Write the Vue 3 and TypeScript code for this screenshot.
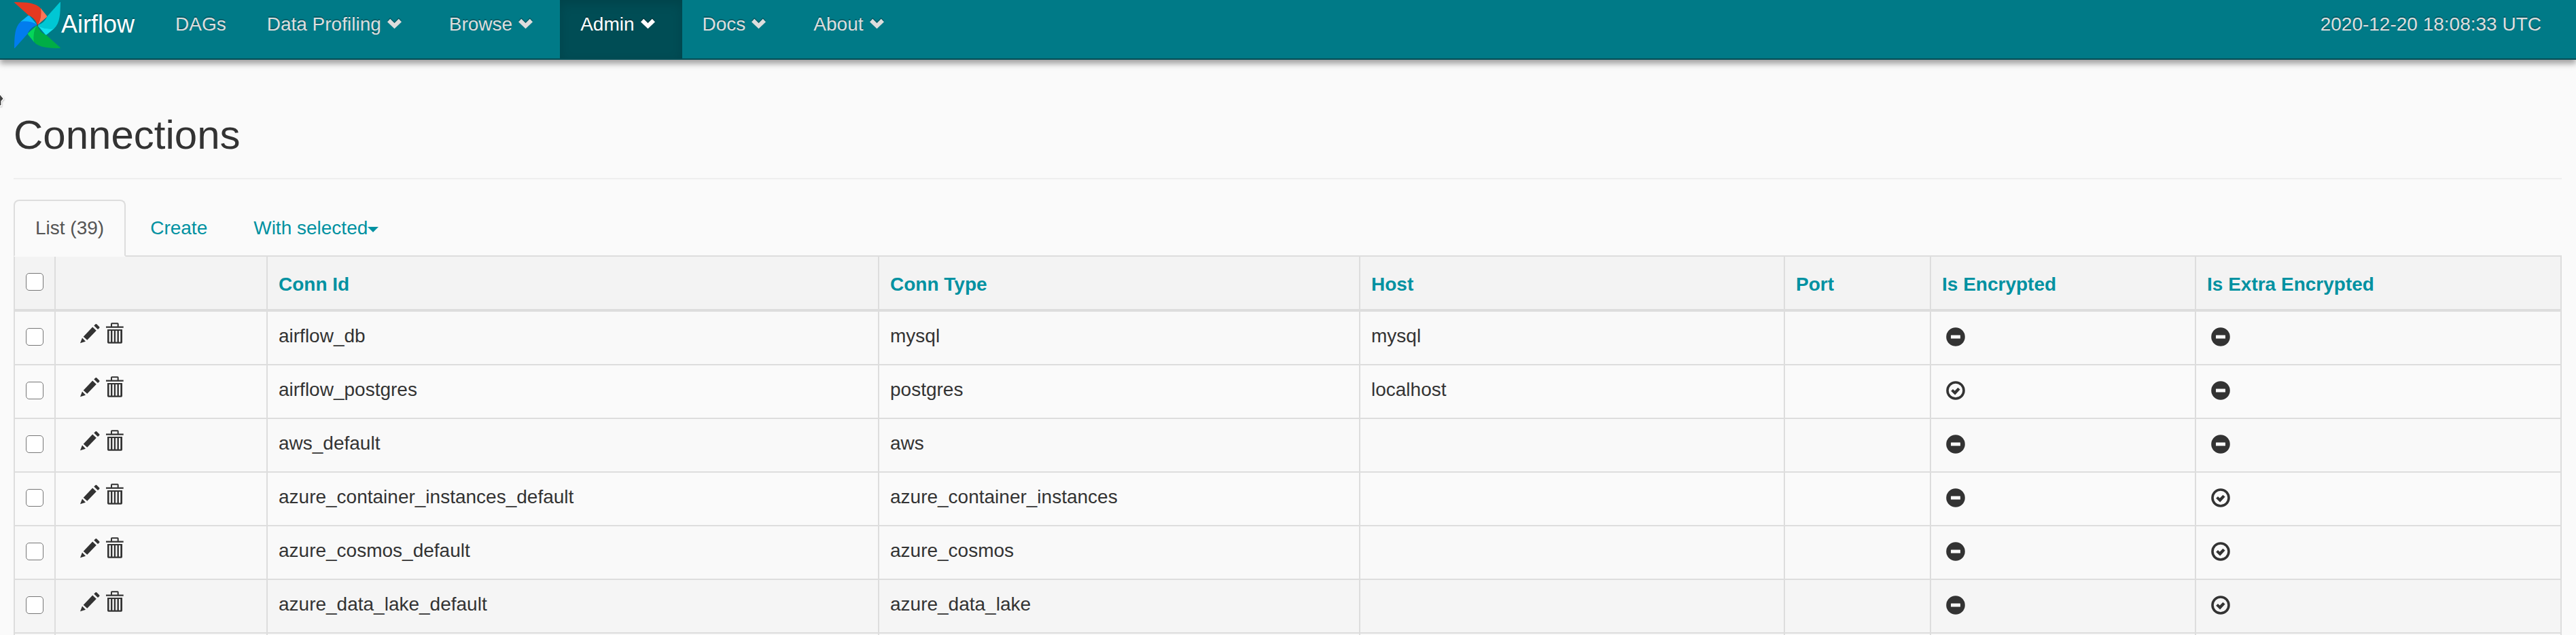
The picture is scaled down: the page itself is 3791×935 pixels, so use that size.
<script setup lang="ts">
interface NavItem {
  label: string
  menu: boolean
  active?: boolean
}

interface Connection {
  id: string
  type: string
  host: string
  port: string
  encrypted: boolean
  extraEncrypted: boolean
}

const navItems: NavItem[] = [
  { label: 'DAGs', menu: false },
  { label: 'Data Profiling', menu: true },
  { label: 'Browse', menu: true },
  { label: 'Admin', menu: true, active: true },
  { label: 'Docs', menu: true },
  { label: 'About', menu: true },
]

const headings: string[] = ['Conn Id', 'Conn Type', 'Host', 'Port', 'Is Encrypted', 'Is Extra Encrypted']

const connections: Connection[] = [
  { id: 'airflow_db', type: 'mysql', host: 'mysql', port: '', encrypted: false, extraEncrypted: false },
  { id: 'airflow_postgres', type: 'postgres', host: 'localhost', port: '', encrypted: true, extraEncrypted: false },
  { id: 'aws_default', type: 'aws', host: '', port: '', encrypted: false, extraEncrypted: false },
  { id: 'azure_container_instances_default', type: 'azure_container_instances', host: '', port: '', encrypted: false, extraEncrypted: true },
  { id: 'azure_cosmos_default', type: 'azure_cosmos', host: '', port: '', encrypted: false, extraEncrypted: true },
  { id: 'azure_data_lake_default', type: 'azure_data_lake', host: '', port: '', encrypted: false, extraEncrypted: true },
]

const blades = [
  { angle: 270, main: '#017cee', light: '#0cb6ff' },
  { angle: 180, main: '#00ad46', light: '#04d659' },
  { angle: 90, main: '#00c7d4', light: '#11e1ee' },
  { angle: 0, main: '#e43921', light: '#ff7557' },
]
</script>

<template>
  <div class="page">
    <nav class="navbar">
      <a class="brand">
        <svg class="logo" viewBox="-102 -102 204 204">
          <g v-for="b in blades" :key="b.angle" :transform="`rotate(${b.angle})`">
            <path :fill="b.light" d="M15 -74L41 -42Q44 -38 41 -35L0 0Q19 -30 15 -74Z" />
            <path :fill="b.main" d="M-101 -102C-50 -101 -8 -100 15 -74C19 -45 14 -15 0 0C-5 -20 -18 -35 -38 -43L-102 -100Z" />
          </g>
          <circle r="4" fill="#51504f" />
        </svg>
        <span>Airflow</span>
      </a>
      <a v-for="item in navItems" :key="item.label" class="nav-item" :class="{ active: item.active }">
        <span>{{ item.label }}</span>
        <svg v-if="item.menu" class="chevron" viewBox="0 0 32 40">
          <path class="chevron-shade" d="M1 14.3L5.2 9.8L11.5 16L17.8 9.8L22 14.3L11.5 24.3Z" />
          <path d="M1 16.3L5.2 11.8L11.5 18L17.8 11.8L22 16.3L11.5 26.3Z" fill="currentColor" />
        </svg>
      </a>
      <span class="clock">2020-12-20 18:08:33 UTC</span>
    </nav>

    <svg class="pointer" viewBox="0 0 10 24">
      <path d="M-4 -2L5.6 9.3L2.2 13V19.8H-4Z" />
    </svg>

    <main>
      <h2>Connections</h2>
      <hr />
      <ul class="tabs">
        <li class="active">List (39)</li>
        <li>Create</li>
        <li>With selected<span class="caret"></span></li>
      </ul>

      <table>
        <colgroup>
          <col class="c-check" />
          <col class="c-actions" />
          <col class="c-id" />
          <col class="c-type" />
          <col class="c-host" />
          <col class="c-port" />
          <col class="c-enc" />
          <col />
        </colgroup>
        <thead>
          <tr>
            <th class="check"><input type="checkbox" /></th>
            <th></th>
            <th v-for="h in headings" :key="h">{{ h }}</th>
          </tr>
        </thead>
        <tbody>
          <tr v-for="(c, i) in connections" :key="c.id" :class="{ hovered: i === 5 }">
            <td class="check"><input type="checkbox" /></td>
            <td class="actions">
              <svg class="pencil" viewBox="0 0 29 30">
                <path d="M0 29.3L3 21.6L8 26.7ZM4.7 19.7L18.2 5.6L23.8 10.8L10.3 24.8ZM20.3 3.5L22.6 1.2Q23.4 .6 24.2 1.2L28.2 5.2Q28.9 6 28.2 6.9L26 9Z" />
              </svg>
              <svg class="trash" viewBox="0 0 26 31">
                <path fill-rule="evenodd" d="M0 5.4H7V2Q7 .3 8.7 .3H17Q18.7 .3 18.7 2V5.4H25.7V7.8H0ZM9 5.4H16.7V2.2H9ZM2 10H24V29Q24 30.7 22.3 30.7H3.7Q2 30.7 2 29ZM4.6 12V28.5H7V12ZM9.4 12V28.5H11.8V12ZM14.1 12V28.5H16.5V12ZM18.9 12V28.5H21.3V12Z" />
              </svg>
            </td>
            <td>{{ c.id }}</td>
            <td>{{ c.type }}</td>
            <td>{{ c.host }}</td>
            <td>{{ c.port }}</td>
            <td v-for="(on, k) in [c.encrypted, c.extraEncrypted]" :key="k" class="flag">
              <svg v-if="on" viewBox="0 0 28 28">
                <circle cx="14" cy="14" r="12" fill="none" stroke="#333" stroke-width="3.6" />
                <path d="M7.2 14.8L10 12L12.7 14.5L17.4 9.8L20.6 12.6L13.2 20.5Z" />
              </svg>
              <svg v-else viewBox="0 0 28 28">
                <path fill-rule="evenodd" d="M14 .2A13.8 13.8 0 1 1 14 27.8A13.8 13.8 0 1 1 14 .2ZM7.6 11.4Q7 11.4 7 12V16Q7 16.6 7.6 16.6H20.4Q21 16.6 21 16V12Q21 11.4 20.4 11.4Z" />
              </svg>
            </td>
          </tr>
          <tr>
            <td v-for="n in 8" :key="n"></td>
          </tr>
        </tbody>
      </table>
    </main>
  </div>
</template>

<style>
body {
  background: #fafafa;
  overflow: hidden;
}
</style>

<style scoped>
.page {
  position: relative;
  height: 935px;
  overflow: hidden;
  background: #fafafa;
  color: #333;
  font: 28px/40px "Liberation Sans", Arial, sans-serif;
}
.navbar {
  display: flex;
  height: 86px;
  background: #007a87;
  border-bottom: 2px solid #004d55;
  box-shadow: 0 6px 8px rgba(0, 0, 0, 0.35);
  color: #ddd;
  text-shadow: 0 -2px 0 rgba(0, 0, 0, 0.25);
}
.brand {
  display: flex;
  width: 207px;
  box-sizing: content-box;
  padding-left: 21px;
  color: #fff;
  font-size: 36px;
}
.brand span {
  padding-top: 16px;
}
.logo {
  width: 68px;
  height: 68px;
  margin: 3px 1px 0 0;
}
.nav-item {
  display: flex;
  gap: 8px;
  padding: 16px 30px 0;
}
.nav-item.active {
  background: #004d55;
  color: #fff;
  box-shadow: inset 0 6px 16px rgba(0, 0, 0, 0.13);
}
.chevron {
  width: 32px;
  height: 40px;
}
.chevron-shade {
  fill: rgba(0, 0, 0, 0.25);
}
.clock {
  margin-left: auto;
  padding: 16px 51px 0 0;
}
.pointer {
  position: absolute;
  left: 0;
  top: 136px;
  width: 10px;
  height: 24px;
  fill: #444;
  stroke: #fff;
  stroke-width: 1.5;
  filter: drop-shadow(0 1px 1px rgba(0, 0, 0, 0.3));
}
main {
  padding: 78px 21px 0 20px;
}
h2 {
  margin: 0;
  font-size: 60px;
  font-weight: 400;
  line-height: 66px;
}
hr {
  margin: 30px 0;
  border: 0;
  border-top: 2px solid #eee;
}
.tabs {
  display: flex;
  gap: 4px;
  height: 82px;
  margin: 0;
  padding: 0;
  list-style: none;
  border-bottom: 2px solid #ddd;
}
.tabs li {
  box-sizing: border-box;
  height: 84px;
  padding: 20px 30px;
  border: 2px solid transparent;
  border-radius: 8px 8px 0 0;
  color: #0091a1;
}
.tabs li.active {
  background: #fafafa;
  border-color: #ddd #ddd #fafafa;
  color: #555;
}
.caret {
  display: inline-block;
  border: 8px solid transparent;
  border-top-color: currentColor;
  border-bottom: 0;
  vertical-align: middle;
}
table {
  width: 3750px;
  table-layout: fixed;
  border-collapse: separate;
  border-spacing: 0;
  border-left: 2px solid #ddd;
}
.c-check { width: 60px; }
.c-actions { width: 312px; }
.c-id { width: 900px; }
.c-type { width: 708px; }
.c-host { width: 625px; }
.c-port { width: 215px; }
.c-enc { width: 390px; }
th,
td {
  box-sizing: border-box;
  height: 79px;
  padding: 16px;
  border-right: 2px solid #ddd;
  border-bottom: 2px solid #ddd;
  text-align: left;
  vertical-align: top;
}
th {
  height: 81px;
  padding-top: 21px;
  border-bottom-width: 4px;
  background: #f3f3f3;
  color: #0091a1;
}
tbody tr:nth-child(odd) {
  background: #f9f9f9;
}
tbody tr.hovered {
  background: #f5f5f5;
}
.check {
  padding-top: 24px;
  padding-bottom: 0;
  line-height: 0;
}
input {
  appearance: none;
  width: 26px;
  height: 26px;
  margin: 0;
  border: 1px solid #767676;
  border-radius: 5px;
  background: #fff;
}
td svg {
  display: block;
  fill: #333;
}
.actions {
  padding: 16px 0 0 36px;
  line-height: 0;
}
.actions svg {
  display: inline-block;
  vertical-align: bottom;
}
.pencil {
  width: 29px;
  height: 30px;
}
.trash {
  width: 26px;
  height: 31px;
  margin-left: 9px;
}
.flag {
  padding: 23px 0 0 22px;
}
.flag svg {
  width: 28px;
  height: 28px;
}
</style>
